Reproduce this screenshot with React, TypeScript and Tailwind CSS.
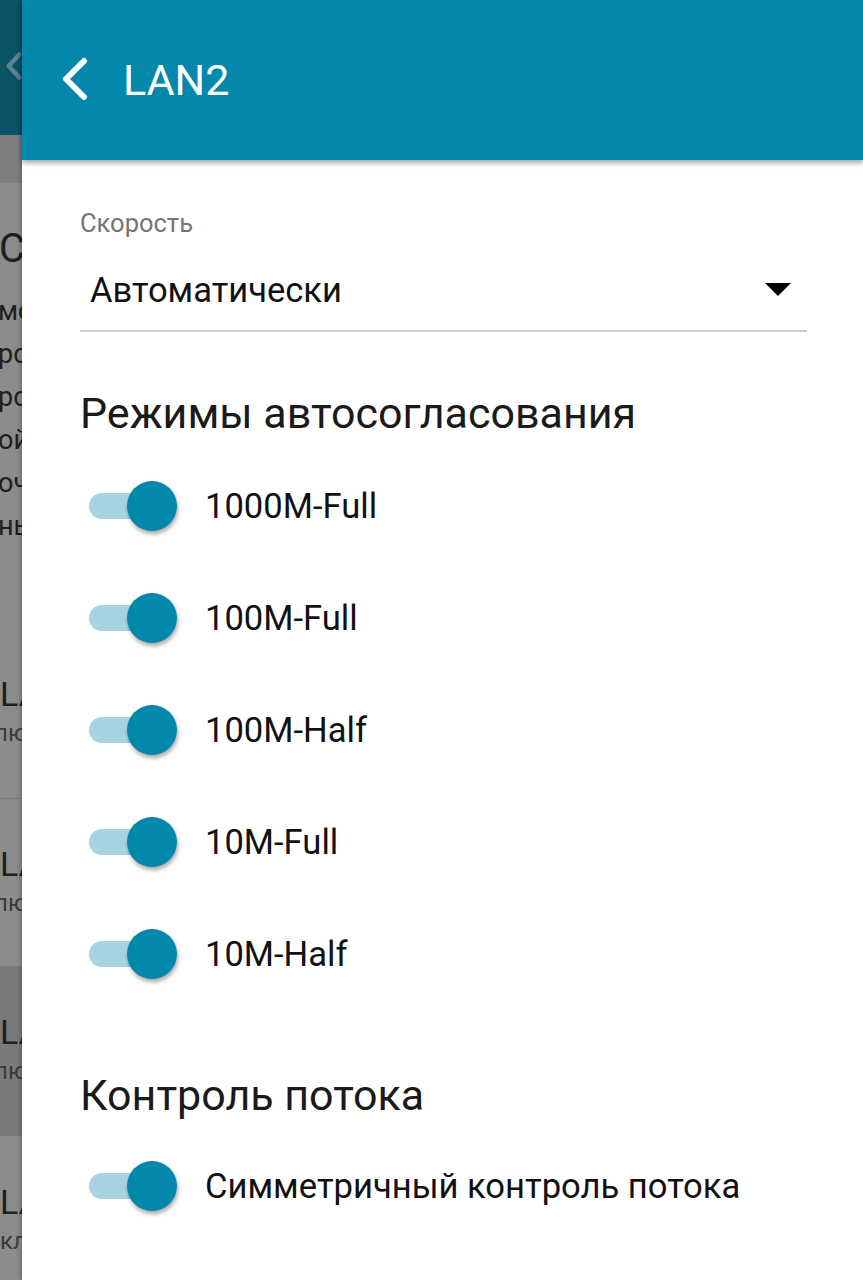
import React, { useState } from 'react';

const FONT = { fontFamily: 'Roboto, "Noto Sans", sans-serif' };

type ToggleProps = { on: boolean; onChange: () => void };

const Toggle: React.FC<ToggleProps> = ({ on, onChange }) => (
  <button
    type="button"
    onClick={onChange}
    className="relative h-[52px] w-[90px] shrink-0"
  >
    <span
      className={`absolute left-0 top-[13px] h-[26px] w-[70px] rounded-full ${
        on ? 'bg-[#a8d4e2]' : 'bg-[#c9c9c9]'
      }`}
    />
    <span
      className={`absolute top-[1px] h-[50px] w-[50px] rounded-full shadow-[1px_3px_4px_rgba(0,0,0,0.35)] ${
        on ? 'left-[38px] bg-[#0388ab]' : 'left-0 bg-[#f5f5f5]'
      }`}
    />
  </button>
);

const BackdropStrip: React.FC = () => (
  <div className="relative w-[22px] shrink-0 overflow-hidden bg-[#8c8c8c] text-[#1e1e1e]">
    <div className="flex h-[135px] items-center bg-[#0b5466] pl-[6px]">
      <svg width="18" height="32" viewBox="0 0 18 32" className="-mt-[4px]">
        <polyline
          points="15,3 3,16 15,29"
          fill="none"
          stroke="#5f838d"
          strokeWidth="5"
          strokeLinecap="round"
          strokeLinejoin="round"
        />
      </svg>
    </div>
    <div className="h-[48px] bg-[#7e7e7e]" />
    <div className="pt-[46px] text-[40px] leading-none -ml-[1px]">С</div>
    <div className="mt-[26px] flex flex-col gap-[10px] text-[27px] leading-[33px] -ml-[2px]">
      <span>мо</span>
      <span>ро</span>
      <span>ро</span>
      <span>ой</span>
      <span>оч</span>
      <span>нь</span>
    </div>
    <div className="mt-[86px] h-[170px] border-b border-[#7a7a7a] pt-[48px]">
      <div className="text-[34px] leading-none">LA</div>
      <div className="mt-[10px] text-[24px] leading-none text-[#3a3a3a] -ml-[6px]">лю</div>
    </div>
    <div className="h-[168px] border-b border-[#7a7a7a] pt-[48px]">
      <div className="text-[34px] leading-none">LA</div>
      <div className="mt-[10px] text-[24px] leading-none text-[#3a3a3a] -ml-[6px]">лю</div>
    </div>
    <div className="h-[170px] border-b border-[#888] bg-[#7a7a7a] pt-[48px]">
      <div className="text-[34px] leading-none">LA</div>
      <div className="mt-[10px] text-[24px] leading-none text-[#3a3a3a] -ml-[6px]">лю</div>
    </div>
    <div className="h-[150px] pt-[48px]">
      <div className="text-[34px] leading-none">LA</div>
      <div className="mt-[10px] text-[24px] leading-none text-[#3a3a3a]">кл</div>
    </div>
  </div>
);

const MODES = ['1000M-Full', '100M-Full', '100M-Half', '10M-Full', '10M-Half'];

export default function App() {
  const [modes, setModes] = useState<boolean[]>(MODES.map(() => true));
  const [flow, setFlow] = useState(true);

  return (
    <div className="flex h-[1280px] w-[863px] overflow-hidden bg-white" style={FONT}>
      <BackdropStrip />

      <div className="relative flex min-w-0 flex-1 flex-col bg-white shadow-[-2px_0_4px_rgba(0,0,0,0.2)]">
        <header className="z-10 flex h-[160px] shrink-0 items-center bg-[#0388ab] pl-[36px] shadow-[0_3px_5px_rgba(0,0,0,0.35)]">
          <svg width="32" height="44" viewBox="0 0 32 44" className="-mt-[2px]">
            <polyline
              points="26,4 8,22 26,40"
              fill="none"
              stroke="#fff"
              strokeWidth="6"
              strokeLinecap="round"
              strokeLinejoin="round"
            />
          </svg>
          <h1 className="ml-[33px] text-[43px] font-normal leading-none text-white">LAN2</h1>
        </header>

        <main className="flex-1 pl-[58px] pr-[56px]">
          <div className="pt-[49px] text-[25.5px] leading-[28px] text-[#757575]">Скорость</div>
          <div className="mt-[34px] flex items-center border-b-2 border-[#cfcfcf] pb-[21px] pl-[10px] pr-[16px]">
            <span className="flex-1 text-[34.5px] leading-[38px] text-[#111]">Автоматически</span>
            <svg width="26" height="14" viewBox="0 0 26 14">
              <polygon points="0,0 26,0 13,13" fill="#000" />
            </svg>
          </div>

          <h2 className="mt-[58px] text-[43px] font-normal leading-[46px] text-[#1a1a1a]">
            Режимы автосогласования
          </h2>

          <div className="mt-[44px] flex flex-col gap-[60px] pl-[9px]">
            {MODES.map((m, i) => (
              <div key={m} className="flex items-center">
                <Toggle
                  on={modes[i]}
                  onChange={() => setModes(modes.map((v, j) => (j === i ? !v : v)))}
                />
                <span className="ml-[26px] text-[34.6px] leading-none text-[#111]">{m}</span>
              </div>
            ))}
          </div>

          <h2 className="mt-[92px] text-[43px] font-normal leading-[46px] text-[#1a1a1a]">
            Контроль потока
          </h2>

          <div className="mt-[42px] flex items-center pl-[9px]">
            <Toggle on={flow} onChange={() => setFlow(!flow)} />
            <span className="ml-[26px] text-[34.6px] leading-none text-[#111]">
              Симметричный контроль потока
            </span>
          </div>
        </main>
      </div>
    </div>
  );
}
